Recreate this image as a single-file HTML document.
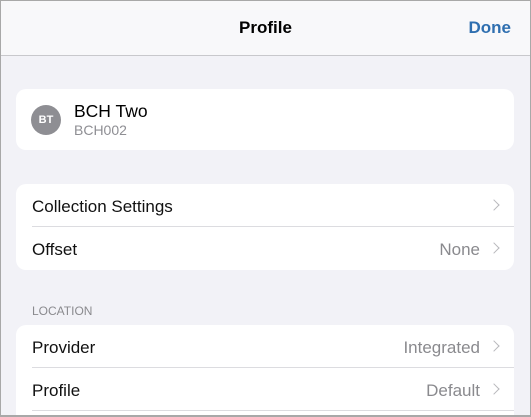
<!DOCTYPE html><html><head><style>
html,body{margin:0;width:531px;height:417px;overflow:hidden}
body{background:#f2f2f7;font-family:"Liberation Sans",sans-serif;position:relative}
.frame{position:absolute;left:0;top:0;width:529px;height:414px;border:1px solid #a8a8a8;border-bottom:2px solid #a8a8a8;pointer-events:none;z-index:5}
.hdr{position:absolute;left:0;top:0;width:531px;height:55px;background:#f8f8fa;border-bottom:1px solid #c8c8cc}
.t{position:absolute;top:18px;width:100%;text-align:center;font-size:17px;font-weight:bold;color:#000}
.done{position:absolute;right:20px;top:18px;font-size:17px;font-weight:bold;color:#2f6fb0}
.card{position:absolute;left:16px;width:498px;background:#fff;border-radius:10px;overflow:hidden}
.row{position:relative;height:43px;font-size:17px;color:#111}
.row .l{position:absolute;left:16px;top:13px}
.row .r{position:absolute;right:34px;top:13px;color:#8a8a8e}
.row .c{position:absolute;right:16px;top:17px;width:7px;height:7px;border-right:1.6px solid #b8b8bc;border-top:1.6px solid #b8b8bc;transform:rotate(45deg)}
.div{position:absolute;left:16px;right:0;bottom:0;height:1px;background:#dcdce0}
</style></head><body>
<div class="hdr"><div class="t">Profile</div><div class="done">Done</div></div>
<div class="card" style="top:89px;height:61px">
<div style="position:absolute;left:15px;top:16px;width:30px;height:30px;border-radius:50%;background:#8e8e93;color:#fff;font-size:11px;font-weight:bold;text-align:center;line-height:30px">BT</div>
<div style="position:absolute;left:58px;top:12px;font-size:17.5px;color:#000">BCH Two</div>
<div style="position:absolute;left:58px;top:33px;font-size:14px;color:#8e8e93">BCH002</div>
</div>
<div class="card" style="top:184px;height:86px">
<div class="row"><span class="l">Collection Settings</span><span class="c"></span><div class="div"></div></div>
<div class="row"><span class="l">Offset</span><span class="r">None</span><span class="c"></span></div>
</div>
<div style="position:absolute;left:32px;top:304px;font-size:12px;color:#8a8a8e">LOCATION</div>
<div class="card" style="top:325px;height:100px">
<div class="row"><span class="l">Provider</span><span class="r">Integrated</span><span class="c"></span><div class="div"></div></div>
<div class="row"><span class="l">Profile</span><span class="r">Default</span><span class="c"></span><div class="div"></div></div>
</div>
<div class="frame"></div>
</body></html>
